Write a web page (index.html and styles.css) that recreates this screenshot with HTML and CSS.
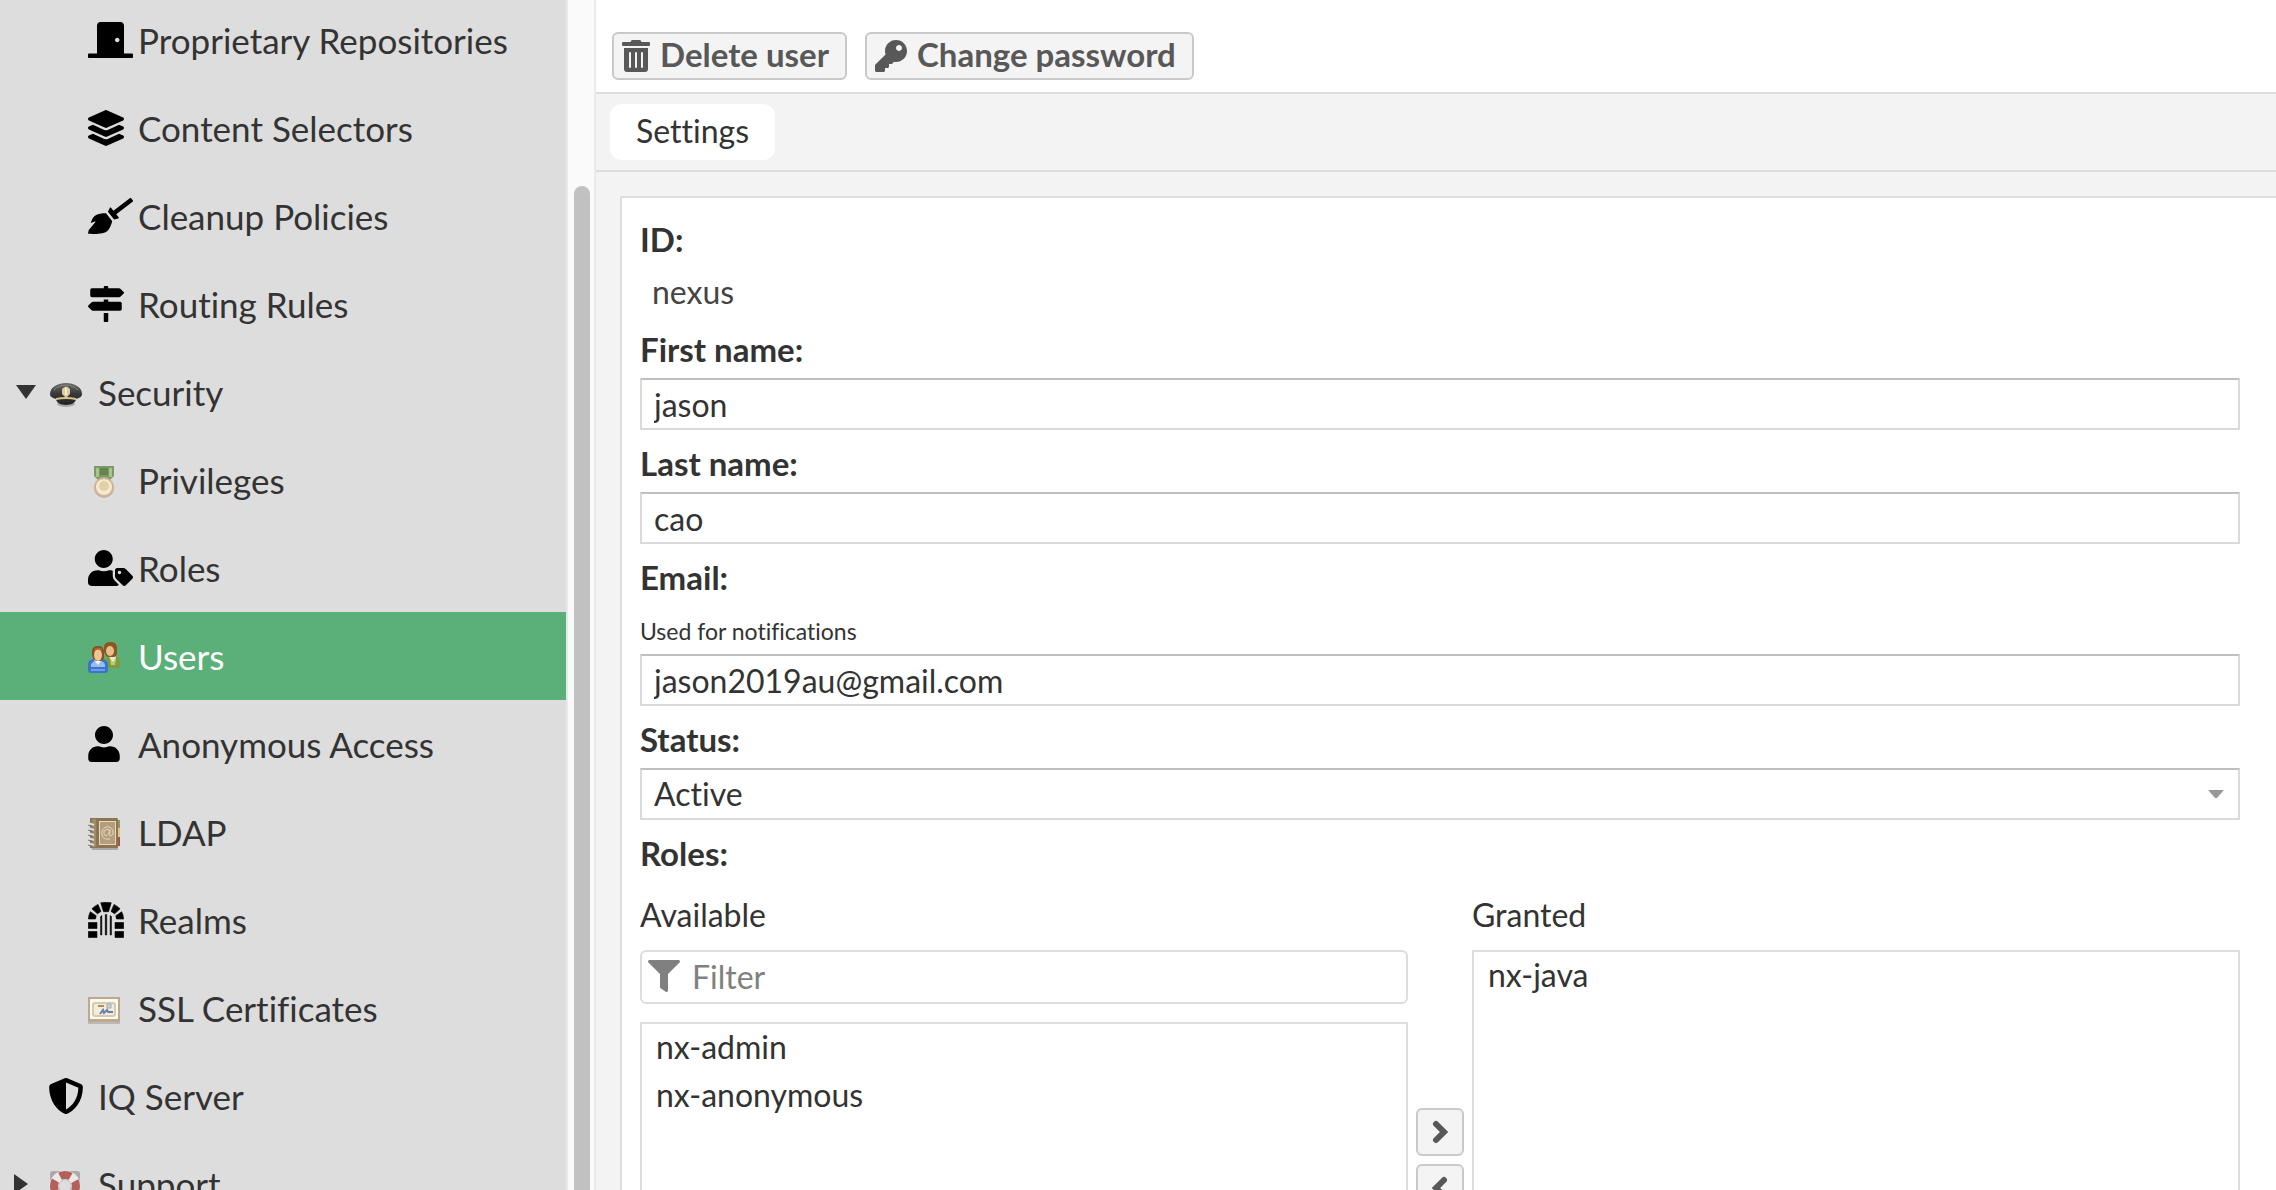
FILE: index.html
```html
<!DOCTYPE html>
<html lang="en">
<head>
<meta charset="utf-8">
<meta name="viewport" content="width=device-width, initial-scale=1">
<title>Users</title>
<link rel="stylesheet" href="styles.css">
</head>
<body>
<div class="app">
  <nav class="sidebar" aria-label="Administration">
    <ul class="tree">
      <li><a class="node child" href="#proprietary"><span class="node-icon"><svg width="45" height="36" viewBox="0 0 640 512" fill="#000" aria-hidden="true"><path d="M624 448H512V50.8C512 22.78 490.47 0 464 0H175.99c-26.47 0-48 22.78-48 50.8V448H16c-8.84 0-16 7.16-16 16v32c0 8.84 7.16 16 16 16h608c8.84 0 16-7.16 16-16v-32c0-8.84-7.16-16-16-16zM415.99 288c-17.67 0-32-14.33-32-32s14.33-32 32-32 32 14.33 32 32c.01 17.67-14.32 32-32 32z"/></svg></span>Proprietary Repositories</a></li>
      <li><a class="node child" href="#selectors"><span class="node-icon"><svg width="36" height="36" viewBox="0 0 512 512" fill="#000" aria-hidden="true"><path d="M12.41 148.02l232.94 105.67c6.8 3.09 14.49 3.09 21.29 0l232.94-105.67c16.55-7.51 16.55-32.52 0-40.03L266.65 2.31a25.607 25.607 0 0 0-21.29 0L12.41 107.98c-16.55 7.51-16.55 32.53 0 40.04zm487.18 88.28l-58.09-26.33-161.64 73.27c-7.56 3.43-15.59 5.17-23.86 5.17s-16.29-1.74-23.86-5.17L70.51 209.97l-58.1 26.33c-16.55 7.5-16.55 32.5 0 40l232.94 105.59c6.8 3.08 14.49 3.08 21.29 0L499.59 276.3c16.55-7.5 16.55-32.5 0-40zm0 127.8l-57.87-26.23-161.86 73.37c-7.56 3.43-15.59 5.17-23.86 5.17s-16.29-1.74-23.86-5.17L70.29 337.87 12.41 364.1c-16.55 7.5-16.55 32.5 0 40l232.94 105.59c6.8 3.08 14.49 3.08 21.29 0L499.59 404.1c16.55-7.5 16.55-32.5 0-40z"/></svg></span>Content Selectors</a></li>
      <li><a class="node child" href="#cleanup"><span class="node-icon"><svg width="45" height="36" viewBox="0 0 640 512" fill="#000" aria-hidden="true"><path d="M256.47 216.77l86.73 109.18s-16.6 102.36-76.57 150.12C206.66 523.85 0 510.19 0 510.19s3.8-23.14 11-55.43l94.62-112.17c3.97-4.7-.87-11.62-6.65-9.5l-60.4 22.09c14.44-41.66 32.72-80.04 54.6-97.47 59.97-47.76 163.3-40.94 163.3-40.94zM636.53 31.03l-19.86-25c-5.49-6.9-15.52-8.05-22.41-2.56l-232.48 177.8-34.14-42.97c-5.09-6.41-15.14-5.21-18.59 2.21l-25.33 54.55 86.73 109.18 58.8-12.45c8-1.69 11.42-11.2 6.34-17.6l-34.09-42.92 232.48-177.8c6.89-5.48 8.04-15.53 2.55-22.44z"/></svg></span>Cleanup Policies</a></li>
      <li><a class="node child" href="#routing"><span class="node-icon"><svg width="36" height="36" viewBox="0 0 512 512" fill="#000" aria-hidden="true"><path d="M507.31 84.69L464 41.37c-6-6-14.14-9.37-22.63-9.37H288V16c0-8.84-7.16-16-16-16h-32c-8.84 0-16 7.16-16 16v16H56c-13.25 0-24 10.75-24 24v80c0 13.25 10.75 24 24 24h385.37c8.49 0 16.62-3.37 22.63-9.37l43.31-43.31c6.25-6.26 6.25-16.38 0-22.63zM224 496c0 8.84 7.16 16 16 16h32c8.84 0 16-7.16 16-16V384h-64v112zm232-272H288v-32h-64v32H70.63c-8.49 0-16.62 3.37-22.63 9.37L4.69 276.69c-6.25 6.25-6.25 16.38 0 22.63L48 342.63c6 6 14.14 9.37 22.63 9.37H456c13.25 0 24-10.75 24-24v-80c0-13.25-10.75-24-24-24z"/></svg></span>Routing Rules</a></li>
      <li><a class="node" href="#security"><span class="toggle"><svg width="24" height="24" viewBox="0 0 24 24" fill="#333" aria-hidden="true"><path d="M2 5h20L12 19z"/></svg></span><span class="node-icon"><svg width="36" height="36" viewBox="0 0 36 36" aria-hidden="true">
        <defs><linearGradient id="cap" x1="0" y1="0" x2="0" y2="1"><stop offset="0" stop-color="#6a6a6a"/><stop offset=".5" stop-color="#383838"/><stop offset="1" stop-color="#222"/></linearGradient></defs>
        <ellipse cx="18" cy="30" rx="9" ry="3" fill="#777" opacity=".5"/>
        <path d="M2 20C2 13 10 9 18 9s16 4 16 11c0 3-3 4-6 5 0 3-4 6-10 6S8 28 8 25c-3-1-6-2-6-5z" fill="url(#cap)"/>
        <path d="M6 16c3-3 7-5 12-5s9 2 12 5" fill="none" stroke="#8a8a8a" stroke-width="1"/>
        <path d="M8 24q10-2 20 0v2q-10-2-20 0z" fill="#d8c48e"/>
        <path d="M14 15q4-5 8 0v5l-4 4-4-4z" fill="#d9cb9b"/><path d="M17 14h2v7h-2z" fill="#f3ecc8"/></svg></span>Security</a></li>
      <li><a class="node child" href="#privileges"><span class="node-icon"><svg width="36" height="36" viewBox="0 0 36 36" aria-hidden="true">
        <path d="M6 4h20v10l-4 4H10l-4-4z" fill="#7c9a66"/><path d="M8 6h3v9H8zM21 6h3v9h-3z" fill="#a9c48f"/><path d="M12 6h8v7h-8z" fill="#64844d"/>
        <circle cx="16" cy="26" r="10" fill="#a89a8a" opacity=".6"/><circle cx="16" cy="25" r="10" fill="#cfb294"/><circle cx="16" cy="25" r="8" fill="#f3ead0"/><circle cx="16" cy="24" r="5" fill="#e0d0a2"/></svg></span>Privileges</a></li>
      <li><a class="node child" href="#roles"><span class="node-icon"><svg width="45" height="36" viewBox="0 0 640 512" fill="#000" aria-hidden="true"><path d="M630.6 364.9l-90.3-90.2c-12-12-28.3-18.7-45.3-18.7h-79.3c-17.7 0-32 14.3-32 32v79.2c0 17 6.7 33.2 18.7 45.2l90.3 90.2c12.5 12.5 32.8 12.5 45.3 0l92.5-92.5c12.6-12.5 12.6-32.7.1-45.2zm-182.8-21c-13.3 0-24-10.7-24-24s10.7-24 24-24 24 10.7 24 24c0 13.2-10.7 24-24 24zm-223.8-88c70.7 0 128-57.3 128-128C352 57.3 294.7 0 224 0S96 57.3 96 128c0 70.6 57.3 127.9 128 127.9zm127.8 111.2V294c-12.2-3.6-24.9-6.2-38.2-6.2h-16.7c-22.2 10.2-46.9 16-72.9 16s-50.6-5.8-72.9-16h-16.7c-74.2 0-134.4 60.2-134.4 134.3v41.6c0 26.5 21.5 48 48 48h352c15.5 0 29.1-7.5 37.9-18.9l-58-58c-18.1-18.1-28.1-42.2-28.1-67.9z"/></svg></span>Roles</a></li>
      <li><a class="node child selected" href="#users" aria-current="page"><span class="node-icon"><svg width="36" height="36" viewBox="0 0 36 36" aria-hidden="true">
        <path d="M17 29v-6c0-4 3-5 7-5s8 1 8 6v4q0 2-3 2H19z" fill="#7f9d3e"/><path d="M22 21h6l-1 6h-4z" fill="#b7cd78"/>
        <path d="M21 19l2-2h4l1 3-3 4z" fill="#efe6d4"/>
        <path d="M16 9q0-5 7-5 6 0 6 6v5q0 3-3 4h-6q-4-2-4-7z" fill="#8c5521"/><ellipse cx="22" cy="13" rx="4" ry="5" fill="#e6bf89"/>
        <path d="M0 32v-5c0-5 3-6 8-6h4c5 0 8 1 8 6v5q0 3-3 3H3q-3 0-3-3z" fill="#3d74c9"/><path d="M3 26q2-3 5-3h4q4 0 5 4v2H3z" fill="#94bdf2"/><path d="M3 31h14v2H3z" fill="#6a9fe8"/>
        <path d="M6 22l4 5 4-5z" fill="#f5f8fc"/>
        <path d="M4 13q0-5 7-5 5 0 5 6v5q0 3-3 4H8q-4-2-4-7z" fill="#8a4f22"/><ellipse cx="10" cy="17" rx="4" ry="6" fill="#ecc591"/><path d="M6 13q4-3 8 0v-3H7z" fill="#a5672f"/></svg></span>Users</a></li>
      <li><a class="node child" href="#anonymous"><span class="node-icon"><svg width="32" height="36" viewBox="0 0 448 512" fill="#000" aria-hidden="true"><path d="M224 256c70.7 0 128-57.3 128-128S294.7 0 224 0 96 57.3 96 128s57.3 128 128 128zm89.6 32h-16.7c-22.2 10.2-46.9 16-72.9 16s-50.6-5.8-72.9-16h-16.7C60.2 288 0 348.2 0 422.4V464c0 26.5 21.5 48 48 48h352c26.5 0 48-21.5 48-48v-41.6c0-74.2-60.2-134.4-134.4-134.4z"/></svg></span>Anonymous Access</a></li>
      <li><a class="node child" href="#ldap"><span class="node-icon"><svg width="36" height="36" viewBox="0 0 36 36" aria-hidden="true">
        <path d="M3 33h27v3H4z" fill="#777" opacity=".5"/><path d="M29 6h3v8h-3z" fill="#8c9b63"/><path d="M29 14h3v9h-3z" fill="#e3c583"/><path d="M29 23h3v9h-3z" fill="#a3563f"/>
        <path d="M2 4h27q1 0 1 2v28H2z" fill="#8a7454"/><path d="M4 5h4v28H4z" fill="#a08a68"/><path d="M11 7h17v24H11z" fill="#e6d9c0"/><path d="M12 8h15v22H12z" fill="#b59e7b"/>
        <path d="M22 16q-4-2-6 1-1 4 2 5 3-1 4-6-1 7 1 6 3-1 2-5-2-5-7-4-5 2-4 8 1 5 8 4" fill="none" stroke="#e3d7c0" stroke-width="1"/>
        <path d="M0 9l6 2M0 14l6 2M0 19l6 2M0 24l6 2M0 29l6 2" stroke="#ddd" stroke-width="2"/><path d="M0 11l5 2M0 16l5 2M0 21l5 2M0 26l5 2M0 31l5 2" stroke="#777" stroke-width="1"/></svg></span>LDAP</a></li>
      <li><a class="node child" href="#realms"><span class="node-icon"><svg width="36" height="36" viewBox="0 0 36 36" fill="#000" stroke="#000" stroke-linejoin="round" stroke-width=".6" aria-hidden="true"><path d="M12.7.8Q18-.2 23.300.8L20.500 9.700h-5zM3.900 6.800Q6.500 4 10 2.400l3 7-3.600 2.400zM32.100 6.800Q29.500 4 26 2.400l-3 7 3.600 2.400zM.4 17Q.5 13 2.300 9.700l5.900 4L7.500 17zM35.600 17Q35.500 13 33.700 9.700l-5.900 4 .7 3.300zM.3 20.500H9v6H.3zM27 20.500h8.700v6H27zM.3 29.500H9v6H.3zM27 29.500h8.700v6H27zM12.600 14.500l1.200-1V33h-1.200zM17.300 12.500h1.400V33h-1.400zM22.200 13.500l1.200 1V33h-1.200z"/></svg></span>Realms</a></li>
      <li><a class="node child" href="#ssl"><span class="node-icon"><svg width="36" height="36" viewBox="0 0 36 36" aria-hidden="true">
        <path d="M0 31h32v3H0z" fill="#888" opacity=".4"/><path d="M0 7h32v25H0z" fill="#c0a88c"/><path d="M2 9h28v20H2z" fill="#fbf9f2"/><path d="M6 12h20l2 2v11l-2 2H6l-2-2V14z" fill="#d6cbb0"/><path d="M7 14h18l1 1v9l-1 1H7l-1-1v-9z" fill="#f2ecd8"/>
        <path d="M10 15h6v2h-6z" fill="#b28d64"/><path d="M19 14h4v4h-4z" fill="#c9d2dc" stroke="#a2acb8"/><path d="M12 24l3-4 1 3 3-3 1 2h5" fill="none" stroke="#6e7fae" stroke-width="2"/></svg></span>SSL Certificates</a></li>
      <li><a class="node" href="#iq"><span class="toggle"></span><span class="node-icon"><svg width="36" height="36" viewBox="0 0 512 512" fill="#000" aria-hidden="true"><path d="M466.5 83.7l-192-80a48.15 48.15 0 0 0-36.9 0l-192 80C27.7 91.1 16 108.6 16 128c0 198.500 114.500 335.700 221.500 380.300 11.800 4.900 25.100 4.900 36.900 0C360.100 472.600 496 349.300 496 128c0-19.400-11.700-36.900-29.500-44.300zM256.100 446.300l-.1-381 175.900 73.300c-3.300 151.400-82.100 261.100-175.800 307.700z"/></svg></span>IQ Server</a></li>
      <li><a class="node" href="#support"><span class="toggle"><svg width="24" height="24" viewBox="0 0 24 24" fill="#333" aria-hidden="true"><path d="M0 2l14 10L0 22z"/></svg></span><span class="node-icon"><svg width="36" height="36" viewBox="0 0 36 36" aria-hidden="true">
        <rect x="2" y="5" width="30" height="30" rx="3" fill="#aaa"/><circle cx="17" cy="20" r="11" fill="none" stroke="#ebe8e8" stroke-width="9"/><circle cx="17" cy="20" r="11" fill="none" stroke="#b35f5c" stroke-width="8" stroke-dasharray="11 6.280" stroke-dashoffset="5.500"/><circle cx="17" cy="20" r="6" fill="#ddd"/></svg></span>Support</a></li>
    </ul>
  </nav>
  <div class="scrollbar"><div class="thumb"></div></div>
  <main class="main">
    <div class="toolbar">
      <button class="btn" type="button"><svg width="28" height="32" viewBox="0 0 448 512" aria-hidden="true"><path d="M32 464a48 48 0 0 0 48 48h288a48 48 0 0 0 48-48V128H32zm272-256a16 16 0 0 1 32 0v224a16 16 0 0 1-32 0zm-96 0a16 16 0 0 1 32 0v224a16 16 0 0 1-32 0zm-96 0a16 16 0 0 1 32 0v224a16 16 0 0 1-32 0zM432 32H312l-9.400-18.700A24 24 0 0 0 281.100 0H166.800a23.720 23.720 0 0 0-21.400 13.300L136 32H16A16 16 0 0 0 0 48v32a16 16 0 0 0 16 16h416a16 16 0 0 0 16-16V48a16 16 0 0 0-16-16z"/></svg><span class="btn-text">Delete user</span></button>
      <button class="btn" type="button"><svg width="32" height="32" viewBox="0 0 512 512" aria-hidden="true"><path d="M512 176.001C512 273.203 433.202 352 336 352c-11.220 0-22.190-1.062-32.827-3.069l-24.012 27.014A23.999 23.999 0 0 1 261.223 384H224v40c0 13.255-10.745 24-24 24h-40v40c0 13.255-10.745 24-24 24H24c-13.255 0-24-10.745-24-24v-78.059c0-6.365 2.529-12.470 7.029-16.971l161.802-161.802C163.108 213.814 160 195.271 160 176 160 78.798 238.797.001 335.999 0 433.488-.001 512 78.511 512 176.001zM336 128c0 26.510 21.490 48 48 48s48-21.490 48-48-21.490-48-48-48-48 21.490-48 48z"/></svg><span class="btn-text">Change password</span></button>
    </div>
    <div class="tabs" role="tablist"><button class="tab" type="button" role="tab" aria-selected="true">Settings</button></div>
    <div class="content">
      <form class="panel">
        <div class="field"><span class="label">ID:</span><span class="value">nexus</span></div>
        <div class="field"><label class="label" for="first">First name:</label><input class="input" id="first" type="text" value="jason"></div>
        <div class="field"><label class="label" for="last">Last name:</label><input class="input" id="last" type="text" value="cao"></div>
        <div class="field"><label class="label" for="email">Email:</label><span class="hint" id="email-hint">Used for notifications</span><input class="input" id="email" type="email" aria-describedby="email-hint" value="jason2019au@gmail.com"></div>
        <div class="field"><label class="label" for="status">Status:</label>
          <div class="select-wrap"><select class="input" id="status"><option>Active</option><option>Disabled</option></select><svg class="arrow" width="16" height="8" viewBox="0 0 16 8" fill="#999" aria-hidden="true"><path d="M0 0h16L9 8H7z"/></svg></div></div>
        <div class="field"><span class="label">Roles:</span>
          <div class="picker">
            <label class="picker-title" for="available">Available</label>
            <label class="picker-title granted" for="granted">Granted</label>
            <div class="available">
              <div class="filter"><svg width="32" height="32" viewBox="0 0 512 512" fill="#808080" aria-hidden="true"><path d="M487.976 0H24.028C2.710 0-8.047 25.866 7.058 40.971L192 225.941V432c0 7.831 3.821 15.170 10.237 19.662l80 55.980C298.020 518.690 320 507.493 320 487.980V225.941l184.947-184.970C520.021 25.896 509.338 0 487.976 0z"/></svg><input class="filter-input" type="text" placeholder="Filter" aria-label="Filter"></div>
              <select class="list" id="available" multiple><option>nx-admin</option><option>nx-anonymous</option></select>
            </div>
            <div class="movers">
              <button class="mover" type="button" aria-label="Add"><svg width="24" height="24" viewBox="0 0 24 24" aria-hidden="true"><path d="M8 4l8 8-8 8"/></svg></button>
              <button class="mover" type="button" aria-label="Remove"><svg width="24" height="24" viewBox="0 0 24 24" aria-hidden="true"><path d="M16 4l-8 8 8 8"/></svg></button>
            </div>
            <select class="list" id="granted" multiple><option>nx-java</option></select>
          </div>
        </div>
      </form>
    </div>
  </main>
</div>
</body>
</html>
```
FILE: styles.css
```css
* { box-sizing: border-box; }

body {
  margin: 0;
  overflow: hidden;
  font-family: Lato, "Liberation Sans", sans-serif;
  font-size: 32px;
  font-variant-ligatures: none;
  line-height: 38px;
  color: #333;
  background: #fff;
}

button, input, select, option { font: inherit; font-variant-ligatures: none; color: inherit; }
svg { display: block; flex: none; }

.app { display: flex; height: 100vh; }

/* Navigation tree, scrolled part of the way down */
.sidebar { flex: none; width: 566px; overflow: hidden; background: #ddd; }
.tree { margin: -4px 0 0; padding: 0; list-style: none; }
.node {
  display: flex;
  align-items: center;
  height: 88px;
  padding-left: 14px;
  font-size: 35px;
  line-height: 37px;
  color: #333;
  text-decoration: none;
  white-space: nowrap;
}
.node .node-icon { flex: none; width: 50px; }
.node.child { padding-left: 88px; }
.toggle { flex: none; width: 34px; }
.node.selected { background: #5ab078; color: #fff; }

.scrollbar {
  flex: none;
  width: 30px;
  padding: 186px 4px 0 6px;
  background: #fafafa;
  border-left: 2px solid #e8e8e8;
  border-right: 2px solid #ebebeb;
}
.thumb { height: 100%; background: #c1c1c1; border-radius: 8px 8px 0 0; }

.main { flex: 1; min-width: 0; display: flex; flex-direction: column; }

.toolbar {
  display: flex;
  flex: none;
  gap: 18px;
  padding: 32px 16px 12px;
  border-bottom: 2px solid #ddd;
}
.btn {
  display: flex;
  align-items: center;
  gap: 10px;
  height: 48px;
  padding: 0 16px 0 8px;
  font-size: 33px;
  font-weight: 700;
  line-height: 32px;
  color: #585858;
  background: #f4f4f4;
  border: 2px solid #c9c9c9;
  border-radius: 6px;
}
.btn svg { fill: #585858; }
.btn-text { padding-bottom: 4px; }

.tabs {
  flex: none;
  padding: 10px 14px;
  background: #f3f3f3;
  border-bottom: 2px solid #ddd;
}
.tab {
  display: block;
  height: 56px;
  padding: 0 26px 2px;
  background: #fff;
  border: 0;
  border-radius: 12px;
}

.content { flex: 1; padding: 24px 0 0 24px; background: #f3f3f3; }
.panel {
  padding: 8px 36px 24px 18px;
  background: #fff;
  border: solid #ddd;
  border-width: 2px 0 0 2px;
}

.field { display: flex; flex-direction: column; padding-top: 14px; }
.label { margin-bottom: 10px; font-size: 33px; font-weight: 700; }
.value { padding-left: 12px; line-height: 48px; color: #444; }
.hint { margin: 10px 0 8px; font-size: 23px; line-height: 30px; }

.input {
  display: block;
  width: 100%;
  height: 52px;
  padding: 0 12px;
  appearance: none;
  background: #fff;
  border: 2px solid #dadada;
  border-top-color: #c0c0c0;
  border-radius: 0;
}
.select-wrap { position: relative; }
.arrow { position: absolute; right: 16px; top: 22px; pointer-events: none; }

.picker {
  display: grid;
  grid-template: auto 420px / 1fr 64px 1fr;
}
.picker-title { margin: 14px 0 16px; }
.granted { grid-column: 3; }
.available { display: flex; flex-direction: column; gap: 18px; }
.filter {
  display: flex;
  gap: 12px;
  height: 54px;
  padding: 8px 6px;
  border: 2px solid #ddd;
  border-radius: 6px;
}
.filter-input {
  flex: 1;
  min-width: 0;
  padding: 0;
  background: none;
  border: 0;
}
.filter-input::placeholder { color: #808080; opacity: 1; }

.list {
  flex: 1;
  width: 100%;
  padding: 3px 0;
  overflow: hidden;
  background: #fff;
  border: 2px solid #ddd;
  border-radius: 0;
}
.list option { padding: 0 14px; line-height: 48px; min-height: 48px; }

.movers {
  display: flex;
  flex-direction: column;
  justify-content: center;
  align-items: center;
  gap: 8px;
}
.mover {
  display: flex;
  align-items: center;
  justify-content: center;
  width: 48px;
  height: 48px;
  padding: 0;
  background: #f4f4f4;
  border: 2px solid #c9c9c9;
  border-radius: 6px;
}
.mover path { fill: none; stroke: #585858; stroke-width: 6; stroke-linecap: round; }
```
